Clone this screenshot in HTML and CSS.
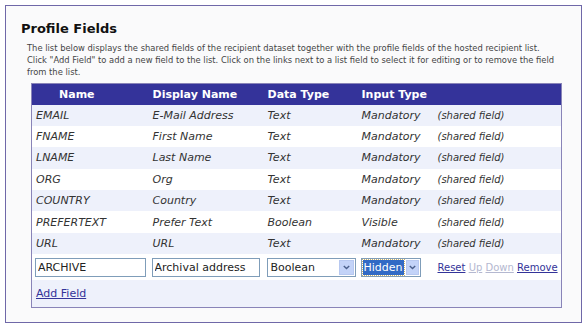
FILE: index.html
```html
<!DOCTYPE html>
<html>
<head>
<meta charset="utf-8">
<link rel="stylesheet" href="styles.css">
</head>
<body>
<div class="panel">
  <h2 class="title">Profile Fields</h2>
  <p class="desc">The list below displays the shared fields of the recipient dataset together with the profile fields of the hosted recipient list.<br>Click "Add Field" to add a new field to the list. Click on the links next to a list field to select it for editing or to remove the field from the list.</p>
  <table class="fields">
    <colgroup>
      <col class="c1"><col class="c2"><col class="c3"><col class="c4"><col class="c5">
    </colgroup>
    <thead>
      <tr class="head">
        <th class="h-name">Name</th><th>Display Name</th><th>Data Type</th><th>Input Type</th><th></th>
      </tr>
    </thead>
    <tbody>
      <tr class="row alt"><td>EMAIL</td><td>E-Mail Address</td><td>Text</td><td>Mandatory</td><td class="shared">(shared field)</td></tr>
      <tr class="row"><td>FNAME</td><td>First Name</td><td>Text</td><td>Mandatory</td><td class="shared">(shared field)</td></tr>
      <tr class="row alt"><td>LNAME</td><td>Last Name</td><td>Text</td><td>Mandatory</td><td class="shared">(shared field)</td></tr>
      <tr class="row"><td>ORG</td><td>Org</td><td>Text</td><td>Mandatory</td><td class="shared">(shared field)</td></tr>
      <tr class="row alt"><td>COUNTRY</td><td>Country</td><td>Text</td><td>Mandatory</td><td class="shared">(shared field)</td></tr>
      <tr class="row"><td>PREFERTEXT</td><td>Prefer Text</td><td>Boolean</td><td>Visible</td><td class="shared">(shared field)</td></tr>
      <tr class="row alt"><td>URL</td><td>URL</td><td>Text</td><td>Mandatory</td><td class="shared">(shared field)</td></tr>
      <tr class="edit">
        <td><input class="tb tb-name" type="text" value="ARCHIVE"></td>
        <td><input class="tb tb-disp" type="text" value="Archival address"></td>
        <td>
          <span class="combo combo-type"><span class="combo-val">Boolean</span><span class="combo-btn"><svg width="7" height="5" viewBox="0 0 7 5"><polyline points="0.8,1 3.5,3.6 6.2,1" fill="none" stroke="#4a5f8c" stroke-width="1.4"/></svg></span></span>
        </td>
        <td>
          <span class="combo combo-input"><span class="combo-val sel">Hidden</span><span class="combo-btn"><svg width="7" height="5" viewBox="0 0 7 5"><polyline points="0.8,1 3.5,3.6 6.2,1" fill="none" stroke="#4a5f8c" stroke-width="1.4"/></svg></span></span>
        </td>
        <td class="actions"><a href="#">Reset</a> <span class="off">Up</span> <span class="off">Down</span> <a href="#">Remove</a></td>
      </tr>
      <tr class="add alt"><td colspan="5"><a href="#">Add Field</a></td></tr>
    </tbody>
  </table>
</div>
</body>
</html>
```
FILE: styles.css
```css
html, body {
  margin: 0;
  padding: 0;
  background: #ffffff;
}
body {
  font-family: "DejaVu Sans", Verdana, sans-serif;
  color: #333;
}
.panel {
  box-sizing: border-box;
  margin: 5px 0 0 5px;
  width: 577px;
  height: 318px;
  border: 1px solid #6f68a8;
  background: #fafafb;
  padding: 15px 0 0 15px;
}
.title {
  margin: 0;
  font-size: 13px;
  line-height: 16px;
  font-weight: bold;
  color: #111;
}
.desc {
  margin: 5px 0 0 6px;
  width: 542px;
  font-family: "DejaVu Sans Condensed", "DejaVu Sans", sans-serif;
  font-stretch: condensed;
  font-size: 9.3px;
  line-height: 12px;
  color: #444;
}
.fields {
  margin: 5px 0 0 10px;
  width: 530px;
  table-layout: fixed;
  border-collapse: collapse;
  border: 1px solid #8984b8;
}
.c1 { width: 117px; }
.c2 { width: 115px; }
.c3 { width: 94px; }
.c4 { width: 76px; }
.c5 { width: 128px; }
.head {
  background: #34339a;
  height: 21px;
}
.head th {
  padding: 0 0 0 4px;
  text-align: left;
  color: #fff;
  font-size: 11px;
  font-weight: bold;
}
.head .h-name { padding-left: 27px; }
.row { height: 21.4px; background: #ffffff; }
.alt { background: #eef1fb; }
.row td {
  padding: 0 0 0 4px;
  font-size: 11px;
  font-style: italic;
  color: #333;
  white-space: nowrap;
}
.row td.shared { font-size: 10px; }
.edit { height: 26px; background: #ffffff; }
.edit td { padding: 0 0 0 3px; white-space: nowrap; }
.tb {
  box-sizing: border-box;
  height: 19px;
  margin: 0;
  padding: 0 2px;
  border: 1px solid #7f9db9;
  background: #fff;
  font-family: "DejaVu Sans", sans-serif;
  font-size: 11px;
  color: #222;
  vertical-align: middle;
}
.tb-name { width: 111px; }
.tb-disp { width: 108px; }
.combo {
  box-sizing: border-box;
  display: inline-flex;
  align-items: stretch;
  height: 19px;
  border: 1px solid #7f9db9;
  background: #fff;
  padding: 1px;
  vertical-align: middle;
  font-size: 11px;
  color: #222;
}
.combo-type { width: 89px; }
.combo-input { width: 60px; }
.combo-val {
  flex: 1;
  display: flex;
  align-items: center;
  padding-left: 2px;
}
.combo-val.sel {
  flex: 0 0 auto;
  margin-right: 2px;
  padding: 0 1px;
  background: #316ac5;
  color: #fff;
  outline: 1px dotted #c9b36a;
}
.combo-btn {
  width: 15px;
  display: flex;
  align-items: center;
  justify-content: center;
  background: #c3d3f8;
  border: 1px solid #b7c8f0;
  box-sizing: border-box;
}
.combo-input .combo-btn { margin-left: auto; }
.actions {
  font-size: 10px;
}
.edit td.actions { padding-left: 4px; }
.actions a { color: #333399; }
.actions .off { color: #b4b8d0; text-decoration: underline; }
.add { height: 27px; }
.add td {
  padding: 0 0 0 4px;
  font-size: 11px;
}
.add a { color: #333399; }
```
